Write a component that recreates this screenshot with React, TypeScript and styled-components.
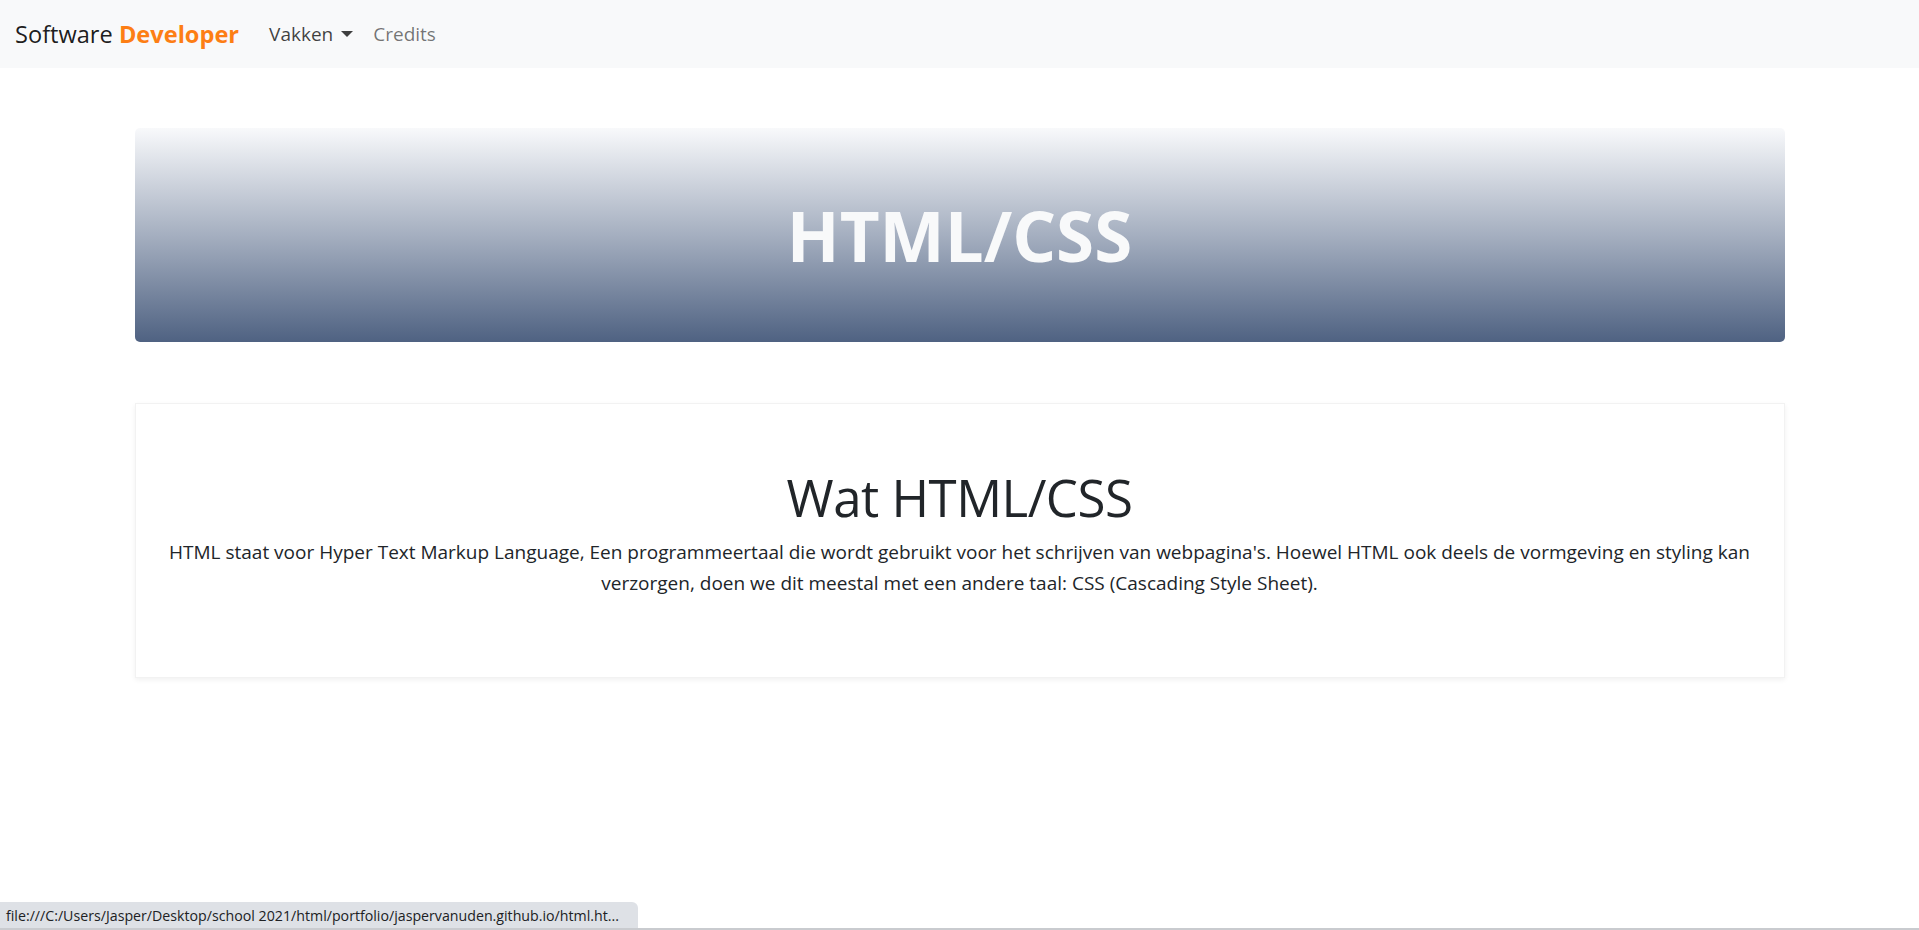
import React from "react";
import styled, { createGlobalStyle } from "styled-components";

const GlobalStyle = createGlobalStyle`
  html, body {
    margin: 0;
    padding: 0;
    background: #ffffff;
  }
  body {
    font-family: "Open Sans", "Noto Sans", "DejaVu Sans", sans-serif;
    color: #212529;
    -webkit-font-smoothing: antialiased;
  }
  * { box-sizing: border-box; }
`;

const Page = styled.div`
  min-height: 930px;
  display: flex;
  flex-direction: column;
`;

const Navbar = styled.nav`
  height: 68px;
  background: #f8f9fa;
  display: flex;
  align-items: center;
  padding: 0 15px;
`;

const Brand = styled.a`
  font-size: 23.6px;
  color: rgba(0, 0, 0, 0.9);
  text-decoration: none;
  margin-right: 20px;
  white-space: nowrap;
`;

const BrandAccent = styled.span`
  font-weight: 700;
  color: #fd7e14;
`;

const NavList = styled.div`
  display: flex;
  align-items: center;
`;

const NavLink = styled.a<{ $active?: boolean }>`
  font-size: 19px;
  padding: 0 10px;
  color: ${(p) => (p.$active ? "rgba(0,0,0,0.75)" : "rgba(0,0,0,0.55)")};
  text-decoration: none;
  display: flex;
  align-items: center;
`;

const Caret = styled.span`
  display: inline-block;
  margin-left: 8px;
  border-top: 6px solid currentColor;
  border-left: 6px solid transparent;
  border-right: 6px solid transparent;
`;

const Main = styled.main`
  width: 1650px;
  margin: 60px auto 0;
  display: flex;
  flex-direction: column;
  gap: 61px;
`;

const Banner = styled.header`
  height: 214px;
  border-radius: 5px;
  background: linear-gradient(180deg, #f8f9fb 0%, #a5afc0 50%, #4f6282 100%);
  display: flex;
  align-items: center;
  justify-content: center;
`;

const BannerTitle = styled.h1`
  margin: 0;
  font-size: 69px;
  font-weight: 700;
  color: #f8f9fa;
  line-height: 1.2;
`;

const Card = styled.section`
  border: 1px solid #f2f2f2;
  box-shadow: 0 2px 5px rgba(0, 0, 0, 0.06);
  padding: 63px 24px 58px;
  text-align: center;
`;

const CardTitle = styled.h2`
  margin: 0 0 10px;
  font-size: 51px;
  font-weight: 500;
  line-height: 60px;
  color: #212529;
  letter-spacing: -0.5px;
`;

const CardText = styled.p`
  margin: 0 0 20px;
  font-size: 19px;
  line-height: 31px;
  color: #212529;
`;

const StatusBubble = styled.div`
  position: fixed;
  left: 0;
  bottom: 2px;
  height: 26px;
  width: 638px;
  background: #dee1e6;
  border-top-right-radius: 6px;
  font-size: 14.2px;
  color: #202124;
  display: flex;
  align-items: center;
  padding: 0 6px;
  white-space: nowrap;
  overflow: hidden;
`;

const BottomEdge = styled.div`
  position: fixed;
  left: 0;
  right: 0;
  bottom: 0;
  height: 2px;
  background: #c9cbcf;
`;

export default function App() {
  return (
    <>
      <GlobalStyle />
      <Page>
        <Navbar>
          <Brand href="#">
            Software <BrandAccent>Developer</BrandAccent>
          </Brand>
          <NavList>
            <NavLink $active href="#">
              Vakken
              <Caret />
            </NavLink>
            <NavLink href="#">Credits</NavLink>
          </NavList>
        </Navbar>
        <Main>
          <Banner>
            <BannerTitle>HTML/CSS</BannerTitle>
          </Banner>
          <Card>
            <CardTitle>Wat HTML/CSS</CardTitle>
            <CardText>
              HTML staat voor Hyper Text Markup Language, Een programmeertaal die wordt gebruikt voor het
              schrijven van webpagina's. Hoewel HTML ook deels de vormgeving en styling kan
              <br />
              verzorgen, doen we dit meestal met een andere taal: CSS (Cascading Style Sheet).
            </CardText>
          </Card>
        </Main>
      </Page>
      <StatusBubble>
        file:///C:/Users/Jasper/Desktop/school 2021/html/portfolio/jaspervanuden.github.io/html.ht...
      </StatusBubble>
      <BottomEdge />
    </>
  );
}
